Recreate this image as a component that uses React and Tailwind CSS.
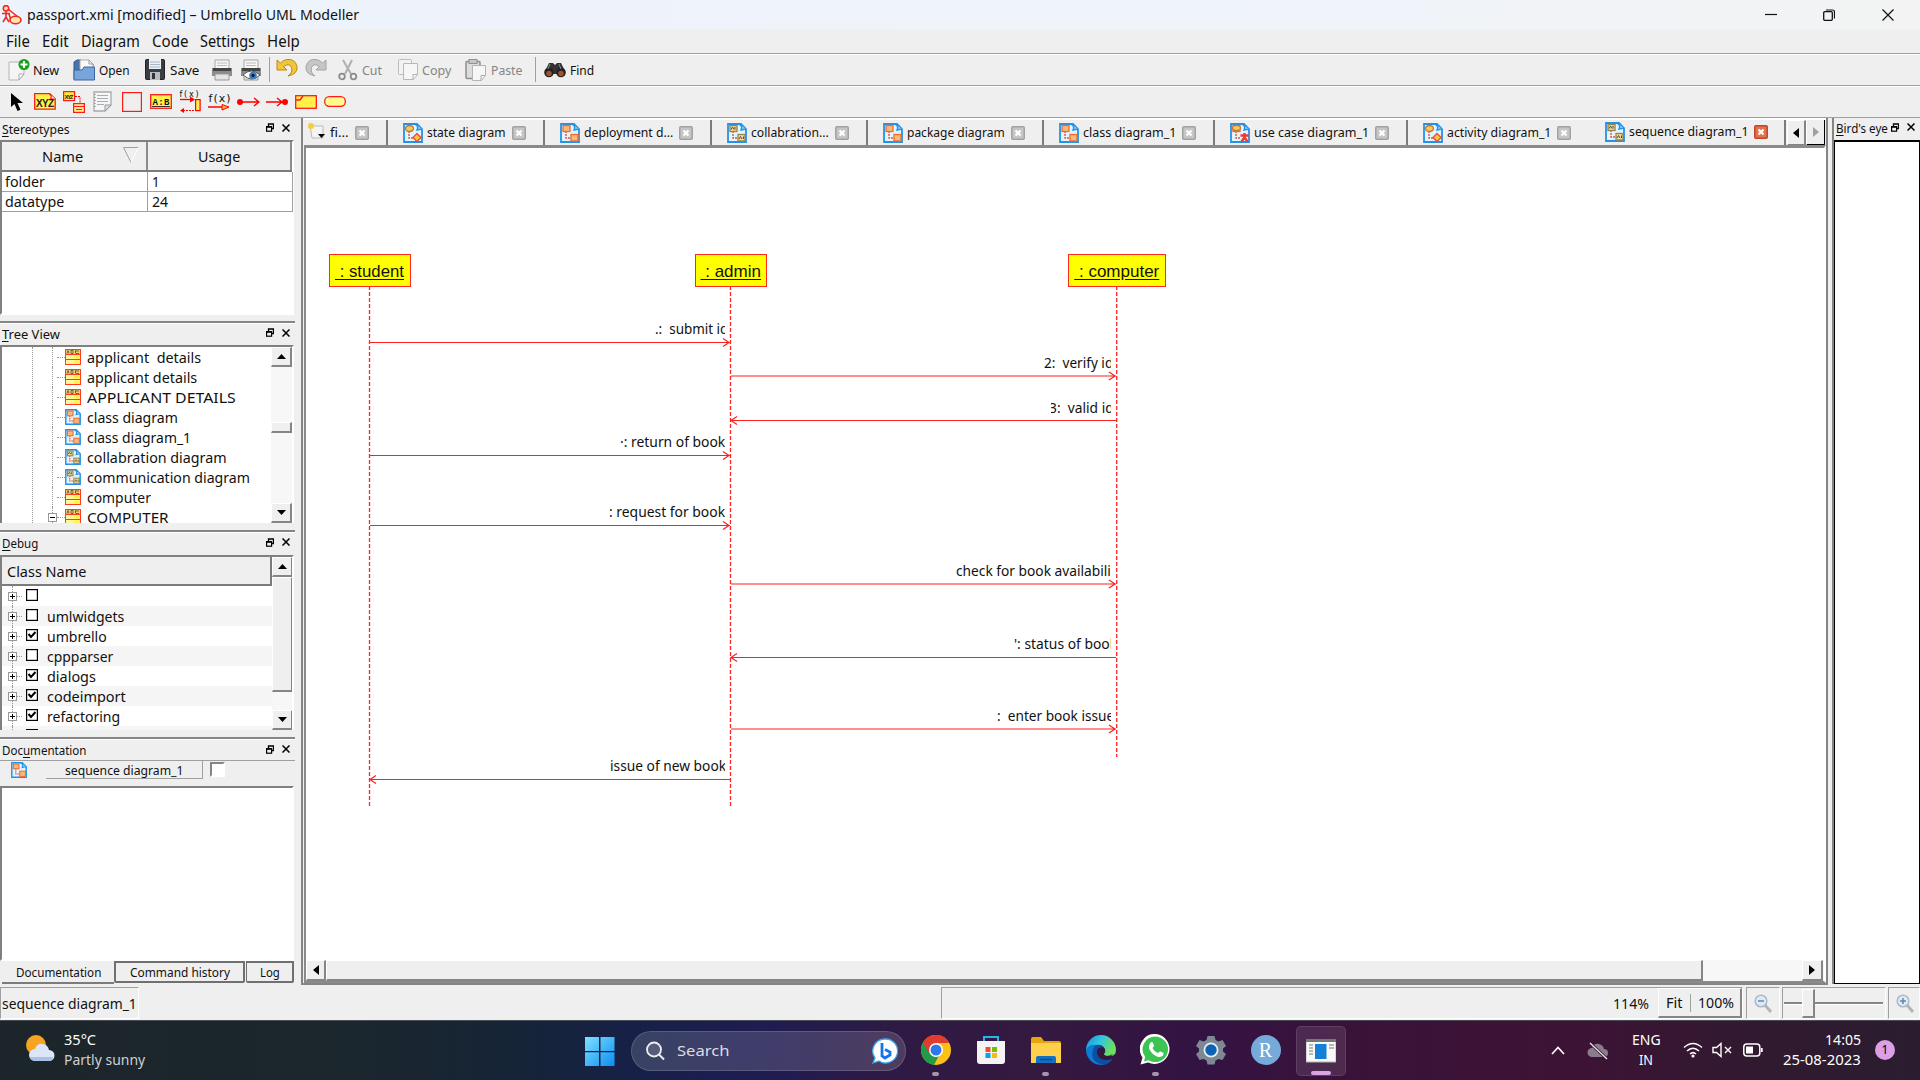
import React, { useLayoutEffect, useRef, useState } from "react";

/* Single line of text fitted to a given advance width. */
function T({ w, className = "", children }) {
  const ref = useRef(null);
  const [scale, setScale] = useState(1);
  useLayoutEffect(() => {
    const natural = ref.current.offsetWidth;
    if (natural) setScale(w / natural);
  }, [w]);
  return (
    <span className={"inline-block shrink-0 " + className} style={{ width: w }}>
      <span
        ref={ref}
        className="inline-block origin-left whitespace-pre"
        style={{ transform: `scaleX(${scale})` }}
      >
        {children}
      </span>
    </span>
  );
}

function Icon({ w, h, box, className = "", children }) {
  return (
    <svg width={w} height={h} viewBox={box || `0 0 ${w} ${h}`} fill="none" className={"block shrink-0 " + className}>
      {children}
    </svg>
  );
}

const bevel = "border-t border-l border-t-white border-l-white border-b-2 border-r-2 border-b-[#858585] border-r-[#858585] bg-[#efefef]";

/* ---------- toolbar icons ---------- */
const NewIcon = ({ className }) => (
  <Icon w={22} h={22} className={className}>
    <path d="M1 3h15v12l-5 6H1z" fill="#f5f5f5" stroke="#b5b5b5" />
    <path d="M16 15h-5v6z" fill="#fff" stroke="#aaa" />
    <circle cx="16" cy="5.500" r="5.500" fill="#14a016" />
    <path d="M16 2v7M12.500 5.500h7" stroke="#fff" strokeWidth="2.200" />
  </Icon>
);
const OpenIcon = ({ className }) => (
  <Icon w={22} h={22} className={className}>
    <path d="M1 20V3l3-2h4l2 4h10v5" fill="#4a74a8" stroke="#35598a" />
    <path d="M7 1h9l4 4v9H7z" fill="#fafafa" stroke="#aaa" />
    <path d="M16 1v4h4" stroke="#999" />
    <path d="M1 11h8l2-3h10.500v13H1z" fill="#77a5dc" stroke="#3a67a0" />
  </Icon>
);
const SaveIcon = ({ className }) => (
  <Icon w={20} h={21} className={className}>
    <rect x="0.500" y="0.500" width="19" height="20" rx="1" fill="#3a3d42" stroke="#222" />
    <rect x="4" y="0" width="12" height="10" fill="#eef1f4" />
    <path d="M5 3h10M5 5.500h10M5 8h10" stroke="#a9b6c4" />
    <rect x="5" y="13" width="10" height="8" fill="#b9bcc0" />
    <rect x="7" y="14" width="3" height="6" fill="#333" />
  </Icon>
);
const PrintIcon = ({ className, preview }) => (
  <Icon w={22} h={22} className={className}>
    <path d="M4 1h14v9H4z" fill="#f7f7f7" stroke="#a5a5a5" />
    <path d="M6 4h10M6 6.500h10" stroke="#bbb" />
    <path d="M1 9h20v8H1z" fill="#8b8b8b" />
    <path d="M2 9h18v3H2z" fill="#444" />
    <path d="M4 15h14v6H4z" fill="#e4e4e4" stroke="#999" />
    {preview && (
      <g>
        <path d="M3 16q8-8 17 0-8 8-17 0z" fill="#fff" stroke="#555" />
        <circle cx="13" cy="16.500" r="3.800" fill="#3f7fc0" />
        <circle cx="13" cy="16.500" r="1.700" fill="#123" />
      </g>
    )}
  </Icon>
);
const UndoIcon = ({ className, flip, fill, stroke }) => (
  <Icon w={22} h={20} className={className}>
    <g transform={flip ? "translate(22 0) scale(-1 1)" : undefined}>
      <path d="M1 2v10h10L7.500 8.500q6-4 8 1 1.500 5-3.500 8.500 10-2 9-9.500-2-8-10-7Q7 2 4.500 5z" fill={fill} stroke={stroke} />
    </g>
  </Icon>
);
const CutIcon = ({ className }) => (
  <Icon w={20} h={22} className={className}>
    <path d="M5 1l8 14M14 1L7 15" stroke="#b0b0b0" strokeWidth="2" />
    <circle cx="4" cy="17.500" r="2.800" stroke="#8c8c8c" strokeWidth="1.800" />
    <circle cx="15.500" cy="17.500" r="2.800" stroke="#8c8c8c" strokeWidth="1.800" />
  </Icon>
);
const CopyIcon = ({ className }) => (
  <Icon w={20} h={21} className={className}>
    <rect x="0.500" y="0.500" width="13" height="15" rx="1" fill="#f3f3f3" stroke="#bdbdbd" />
    <path d="M5.500 4.500h14v11l-4 5h-10z" fill="#f6f6f6" stroke="#b8b8b8" />
    <path d="M19 15.500h-4v5" stroke="#b0b0b0" />
  </Icon>
);
const PasteIcon = ({ className }) => (
  <Icon w={21} h={22} className={className}>
    <rect x="1" y="2.500" width="14" height="17" rx="1" fill="#ddd" stroke="#8f8f8f" strokeWidth="1.500" />
    <rect x="4" y="0.500" width="8" height="4" fill="#c7c7c7" stroke="#909090" />
    <path d="M7.500 6.500h13v10l-4 5h-9z" fill="#f6f6f6" stroke="#b4b4b4" />
    <path d="M20 16.500h-4v5" stroke="#a8a8a8" />
  </Icon>
);
const FindIcon = ({ className }) => (
  <Icon w={22} h={16} className={className}>
    <path d="M5 1h4l2 2 2-2h4l4 8v3H1V9z" fill="#333" />
    <circle cx="5" cy="10.500" r="4.800" fill="#222" />
    <circle cx="17" cy="10.500" r="4.800" fill="#222" />
    <circle cx="5" cy="11.500" r="2.700" fill="#a1562a" />
    <circle cx="17" cy="11.500" r="2.700" fill="#a1562a" />
    <path d="M6 2l-2 5M15 2l2 5" stroke="#888" />
  </Icon>
);

/* ---------- small document/diagram icons ---------- */
function DiagramIcon({ size = 20, kind = "box", className = "" }) {
  const fill = kind === "text" ? "#e9d9a0" : "#f9b87d";
  return (
    <Icon w={size} h={size} box="0 0 20 20" className={className}>
      <path d="M1 1h13l5 5v13H1z" fill="#e3f4fd" stroke="#2492e6" strokeWidth="1.800" />
      <path d="M12 1q4 2 2 6l5-1" fill="#8fd0fa" stroke="#2492e6" strokeWidth="1.400" />
      <path d="M6 8v7h5" stroke="#e8503a" strokeWidth="1.400" strokeDasharray="2 1" />
      {kind === "round" ? <ellipse cx="6.500" cy="5.500" rx="4" ry="3" fill="#f5c95c" stroke="#c8762c" strokeWidth="1.300" /> : (
        <rect x="3" y="2.500" width="7" height="6" fill={fill} stroke={kind === "text" ? "#97834b" : "#ef6b2e"} strokeWidth="1.300" />
      )}
      {kind === "text" && <path d="M4 6.500l1.500-2.500L7 6.500M8 4v2.500" stroke="#57512f" />}
      {kind === "round" ? <path d="M14 10.500l4 4-4 4-4-4z" fill="#ffc63b" stroke="#ef4a3a" strokeWidth="1.300" /> : kind === "actor" ? null : (
        <rect x="11" y="11.500" width="7" height="6.500" fill={fill} stroke={kind === "text" ? "#97834b" : "#ef6b2e"} strokeWidth="1.300" />
      )}
      {kind === "text" && <path d="M12 16l1.500-2.500L15 16M16.500 13.500V16" stroke="#57512f" />}
      {kind === "actor" && (
        <g>
          <ellipse cx="6.500" cy="5" rx="4" ry="2.500" fill="#f5c95c" stroke="#c8762c" strokeWidth="1.200" />
          <path d="M14.500 10v5M10.500 12.500h8M11.500 18.500l3-4 3 4" stroke="#f0392e" strokeWidth="2.400" />
        </g>
      )}
    </Icon>
  );
}
const ClassIcon = () => (
  <Icon w={16} h={16}>
    <rect x="0.500" y="0.500" width="15" height="15" fill="#fff59a" stroke="#ff3b20" />
    <rect x="1" y="1" width="14" height="4" fill="#e6d27c" />
    <path d="M2 4.500l1-3 1 3M6 1.500v3h2v-3zM11 4.500h3M10 2h4M10.500 1.500v3" stroke="#5a4a1c" strokeWidth="0.800" />
    <path d="M0 5.500h16M0 10.500h16" stroke="#ff3b20" />
    <path d="M9 6.500h5.500v3H9zM9 11.500h5.500v3H9z" fill="#fff04a" />
  </Icon>
);

function CloseBox({ active }) {
  return (
    <Icon w={14} h={14}>
      <rect x="0.750" y="0.750" width="12.500" height="12.500" rx="1" fill={active ? "#e2714e" : "#c6c6c6"} stroke={active ? "#c8452a" : "#a2a2a2"} strokeWidth="1.500" />
      <path d="M4.500 4.500l5 5M9.500 4.500l-5 5" stroke="#fff" strokeWidth="2.200" />
    </Icon>
  );
}

/* ---------- dock pieces ---------- */
function DockButtons({ className = "" }) {
  return (
    <div className={"flex items-center " + className}>
      <Icon w={8} h={9}>
        <path d="M2.500 3V0.800h5v4.700H6M2 1h6" stroke="#000" strokeWidth="1.300" />
        <rect x="0.600" y="3.600" width="5" height="4.600" stroke="#000" strokeWidth="1.200" />
        <path d="M0 4h6" stroke="#000" strokeWidth="1.500" />
      </Icon>
      <Icon w={8} h={8} className="ml-2">
        <path d="M0.500 0.500l7 7M7.500 0.500l-7 7" stroke="#000" strokeWidth="1.500" />
      </Icon>
    </div>
  );
}
function DockTitle({ w, pre = "", u, post, className = "" }) {
  return (
    <div className={"flex items-center justify-between pr-[5px] pl-[2px] text-[12.5px] leading-[18px] " + className}>
      <T w={w}>{pre}<span className="underline underline-offset-2">{u}</span>{post}</T>
      <DockButtons className="-mt-1" />
    </div>
  );
}
function Arrow({ dir, color = "#000" }) {
  const d = { up: "M0 5h9L4.500 0z", down: "M0 0h9L4.500 5z", left: "M6 0v10L0 5z", right: "M0 0v10l6-5z" }[dir];
  const v = dir === "up" || dir === "down";
  return <Icon w={v ? 9 : 6} h={v ? 5 : 10}><path d={d} fill={color} /></Icon>;
}
const ScrollButton = ({ dir, className = "h-[20px] w-[21px]" }) => (
  <div className={"flex shrink-0 items-center justify-center " + bevel + " " + className}><Arrow dir={dir} /></div>
);
const Divider = () => <div className="h-[3px] shrink-0 border-t-2 border-b border-t-[#858585] border-b-white" />;

const treeItems = [
  ["applicant  details", 114, "class"],
  ["applicant details", 110, "class"],
  ["APPLICANT DETAILS", 149, "class"],
  ["class diagram", 91, "box"],
  ["class diagram_1", 104, "box"],
  ["collabration diagram", 140, "text"],
  ["communication diagram", 163, "text"],
  ["computer", 64, "class"],
  ["COMPUTER", 82, "class"],
];
const debugItems = [
  ["", 0, false],
  ["umlwidgets", 77, false],
  ["umbrello", 60, true],
  ["cppparser", 66, false],
  ["dialogs", 49, true],
  ["codeimport", 79, true],
  ["refactoring", 73, true],
  ["", 0, false],
];

function LeftDock() {
  return (
    <div className="flex h-[867px] w-[295px] shrink-0 flex-col">
      <DockTitle w={68} u="S" post="tereotypes" className="h-[22px] shrink-0 pt-[1px]" />
      <div className="h-[175px] w-[294px] shrink-0 border-2 border-[#808080] border-r-white border-b-white bg-white">
        <div className="flex h-[30px] border-b-2 border-[#7c7c7c] text-[15px] leading-[29px]">
          <div className="flex w-[146px] border-r-2 border-[#8c8c8c] bg-[#efefef] pl-[40px]">
            <T w={41}>Name</T>
            <Icon w={16} h={16} className="mt-[5px] ml-[40px]">
              <path d="M8 15.500L0.500 0.500h15" stroke="#a0a0a0" />
              <path d="M15.500 0.500L8 15.500" stroke="#fff" />
            </Icon>
          </div>
          <div className="flex w-[145px] justify-center border-r-2 border-[#8c8c8c] bg-[#efefef] pl-px"><T w={42}>Usage</T></div>
        </div>
        {[["folder", 40, "1", 6], ["datatype", 59, "24", 16]].map(([n, w, v, vw]) => (
          <div key={n} className="flex h-[20px] w-[291px] border-r border-b border-[#a0a0a0] text-[15px] leading-[18px]">
            <div className="w-[146px] border-r border-[#a0a0a0] pl-[3px]"><T w={w}>{n}</T></div>
            <div className="pl-[4px]"><T w={v === "1" ? 8 : vw}>{v}</T></div>
          </div>
        ))}
      </div>
      <div className="mt-[6px]"><Divider /></div>
      <DockTitle w={58} u="T" post="ree View" className="h-[21px] shrink-0" />
      <div className="flex h-[178px] w-[294px] shrink-0 overflow-hidden border-2 border-[#808080] border-r-white border-b-0 bg-white">
        <div className="flex w-[270px] pl-[30px]">
          <div className="w-[20px] shrink-0 border-l border-dotted border-[#999]" />
          <div className="w-[218px]">
            {treeItems.map(([n, w, k], i) => (
              <div key={i} className="flex h-[20px] items-center border-l border-dotted border-[#999]">
                {i === 8 ? (
                  <div className="-ml-[5px] flex h-[9px] w-[9px] shrink-0 items-center justify-center border border-[#999] bg-white"><div className="h-px w-[5px] bg-black" /></div>
                ) : <div className="w-[4px]" />}
                <div className="w-[8px] border-t border-dotted border-[#999]" />
                {k === "class" ? <ClassIcon /> : <DiagramIcon size={16} kind={k} />}
                <T w={w} className="ml-[6px] text-[15px] leading-[20px]">{n}</T>
              </div>
            ))}
          </div>
        </div>
        <div className="flex w-[21px] shrink-0 flex-col bg-[#f7f7f7]">
          <ScrollButton dir="up" />
          <div className={"mt-[55px] h-[11px] shrink-0 " + bevel} />
          <div className="grow" />
          <ScrollButton dir="down" />
        </div>
      </div>
      <div className="mt-[7px]"><Divider /></div>
      <DockTitle w={36} u="D" post="ebug" className="h-[22px] shrink-0" />
      <div className="flex h-[175px] w-[294px] shrink-0 overflow-hidden border-2 border-[#808080] border-r-white border-b-0 bg-white">
        <div className="w-[270px] shrink-0">
          <div className="h-[29px] border-r-2 border-b-2 border-[#7c7c7c] bg-[#efefef] pl-[5px] text-[15px] leading-[28px]"><T w={79}>Class Name</T></div>
          {debugItems.map(([n, w, on], i) => (
            <div key={i} className={"flex h-[20px] pl-[6px] " + (i % 2 ? "bg-[#f5f5f5]" : "bg-white")}>
              <div className="flex w-[9px] flex-col items-center">
                <div className="h-[6px] border-l border-dotted border-[#999]" />
                <Icon w={9} h={9}><rect x="0.500" y="0.500" width="8" height="8" fill="#fff" stroke="#999" /><path d="M2 4.500h5M4.500 2v5" stroke="#000" /></Icon>
                <div className="h-[5px] border-l border-dotted border-[#999]" />
              </div>
              <div className="mt-[10px] h-0 w-[5px] border-t border-dotted border-[#999]" />
              <Icon w={12} h={12} className="mt-[3px] ml-[4px]">
                <rect x="0.600" y="0.600" width="10.800" height="10.800" fill="#fff" stroke="#000" strokeWidth="1.200" />
                {on && <path d="M2.500 5l2.500 3L9.500 3" stroke="#000" strokeWidth="2" />}
              </Icon>
              <T w={w} className="ml-[9px] text-[15px] leading-[21px]">{n}</T>
            </div>
          ))}
        </div>
        <div className="flex w-[21px] shrink-0 flex-col bg-[#f7f7f7]">
          <ScrollButton dir="up" />
          <div className={"h-[115px] shrink-0 " + bevel} />
          <div className="grow" />
          <ScrollButton dir="down" />
        </div>
      </div>
      <div className="mt-[7px]"><Divider /></div>
      <DockTitle w={84} pre="Doc" u="u" post="mentation" className="h-[20px] shrink-0 pt-[2px]" />
      <div className="flex h-[26px] shrink-0 border-t border-[#a0a0a0] pl-[11px]">
        <DiagramIcon size={16} className="mt-[1px]" />
        <div className="ml-[19px] flex h-[18px] w-[157px] justify-center border-r border-b border-[#a0a0a0] text-[12.5px] leading-[19px]"><T w={118}>sequence diagram_1</T></div>
        <div className="mt-[1px] ml-[7px] h-[15px] w-[15px] border-2 border-[#858585] border-r-white border-b-white bg-white" />
      </div>
      <div className="h-[175px] w-[294px] shrink-0 border-2 border-[#808080] border-r-white border-b-white bg-white" />
      <div className="flex h-[24px] shrink-0 pl-[2px] text-[12.5px]">
        <div className="flex h-[23px] w-[112px] justify-center border-b-2 border-[#7c7c7c] leading-[24px]"><T w={85}>Documentation</T></div>
        <div className="flex h-[22px] w-[131px] justify-center rounded-b-[2px] border-2 border-[#707070] leading-[19px]"><T w={100}>Command history</T></div>
        <div className="ml-px flex h-[22px] w-[48px] justify-center rounded-b-[2px] border-2 border-l border-[#707070] leading-[19px]"><T w={20}>Log</T></div>
      </div>
    </div>
  );
}

const tabs = [
  ["state diagram", 79, "round", "w-[157px]"],
  ["deployment d...", 89, "box", "w-[167px]"],
  ["collabration...", 78, "text", "w-[156px]"],
  ["package diagram", 98, "box", "w-[176px]"],
  ["class diagram_1", 93, "box", "w-[171px]"],
  ["use case diagram_1", 115, "actor", "w-[193px]"],
  ["activity diagram_1", 104, "round", "w-[182px]"],
];

/* Canvas origin lies at the top left corner of the white sheet. */
const lifelines = [
  [": student", "left-[22.5px]", "w-[82px]", 69],
  [": admin", "left-[388.5px]", "w-[72px]", 60],
  [": computer", "left-[762px]", "w-[97.5px]", 85],
];
const messages = [
  [64, 424, 194.500], [425, 810, 228], [810, 425, 272.500], [64, 424, 307.500],
  [64, 424, 377.500], [425, 810, 436], [810, 425, 509.500], [425, 810, 581], [424, 64, 631.500],
];
const labels = [
  [".:  submit id", "left-[349px] w-[70px] top-[171px]", 73, ""],
  ["2:  verify id", "left-[738px] w-[67px] top-[205px]", 69, ""],
  ["3:  valid id", "left-[745px] w-[60px] top-[250px]", 65, "-ml-[2px]"],
  ["·: return of book", "left-[314px] w-[105px] top-[284px]", 105, ""],
  [": request for book", "left-[303px] w-[116px] top-[354px]", 116, ""],
  ["check for book availabili", "left-[650px] w-[155px] top-[413px]", 155, ""],
  ["': status of book", "left-[708px] w-[97px] top-[486px]", 103, ""],
  [":  enter book issue", "left-[691px] w-[114px] top-[558px]", 117, ""],
  ["issue of new book", "left-[304px] w-[115px] top-[608px]", 116, ""],
];

function Canvas() {
  return (
    <div className="relative h-[812px] overflow-hidden bg-white">
      <svg width="1200" height="812" className="absolute top-0 left-0" fill="none">
        <path d="M63.500 138V659M424.500 138V659M810.700 138V609" stroke="#ff2525" strokeWidth="1.300" strokeDasharray="4 2" />
        {messages.map(([a, b, y], i) => {
          const dir = b > a ? 1 : -1;
          const tip = dir > 0 ? b - 1 : b;
          return <path key={i} d={`M${a} ${y}H${b}M${tip - dir * 6} ${y - 4}L${tip} ${y}L${tip - dir * 6} ${y + 4}`} stroke="#ff2020" strokeWidth="1.200" />;
        })}
      </svg>
      {lifelines.map(([n, l, w, tw]) => (
        <div key={n} className={"absolute top-[106px] flex h-[33px] justify-center border-[1.5px] border-[#ff2a1a] bg-[#ff0] font-['Liberation_Sans'] text-[17px] leading-[33px] " + l + " " + w}>
          <T w={tw}><span className="underline underline-offset-2">{" " + n}</span></T>
        </div>
      ))}
      {labels.map(([n, c, w, m]) => (
        <div key={n} className={"absolute flex h-[20px] overflow-hidden text-[14px] leading-[20px] " + c}><T w={w} className={m}>{n}</T></div>
      ))}
    </div>
  );
}

function Workspace() {
  return (
    <div className="ml-[6px] flex h-[867px] w-[1527px] shrink-0 flex-col border-r-2 border-b-2 border-l-2 border-[#858585]">
      <div className="flex h-[27px] shrink-0 border-t-2 border-white text-[12.5px]">
        <div className="flex w-[85px] shrink-0 items-center border-r-2 border-[#7c7c7c] pt-px pl-[4px]">
          <Icon w={18} h={18} className="-mt-1">
            <path d="M3 4h13v12H5z" fill="#f4f4f4" stroke="#bbb" />
            <circle cx="4" cy="4" r="3" fill="#f4cf3b" />
            <path d="M11 12h7l-3.500 4z" fill="#000" />
          </Icon>
          <T w={19} className="ml-[5px]">fi...</T>
          <div className="ml-[6px]"><CloseBox /></div>
        </div>
        {tabs.map(([n, w, k, cls], i) => (
          <div key={n} className={"flex shrink-0 items-center pt-px pl-[15px] " + cls + (i < 6 ? " border-r-2 border-[#7c7c7c]" : "")}>
            <DiagramIcon kind={k} />
            <T w={w} className="ml-[4px]">{n}</T>
            <div className="ml-[6px]"><CloseBox /></div>
          </div>
        ))}
        <div className="flex w-[196px] shrink-0 items-center border-r-2 border-[#7c7c7c] pb-px pl-[15px]">
          <DiagramIcon kind="text" />
          <T w={119} className="ml-[4px]">sequence diagram_1</T>
          <div className="ml-[6px]"><CloseBox active /></div>
        </div>
        <ScrollButton dir="left" className="ml-px h-[26px] w-[19px]" />
        <div className="flex h-[26px] w-[19px] shrink-0 items-center justify-center border-r border-b-2 border-l border-black border-l-white bg-[#efefef]"><Arrow dir="right" color="#a0a0a0" /></div>
      </div>
      <div className="ml-px h-[838px] border-t-[3px] border-r-2 border-b-2 border-l-2 border-[#8a8a8a] border-r-white">
        <Canvas />
        <div className="flex h-[21px] bg-[#f7f7f7]">
          <ScrollButton dir="left" className="h-[21px] w-[20px]" />
          <div className={"w-[1377px] " + bevel} />
          <div className="grow" />
          <ScrollButton dir="right" className="mr-px h-[21px] w-[21px]" />
        </div>
      </div>
    </div>
  );
}

function BirdsEye() {
  return (
    <div className="ml-[4px] flex h-[866px] w-[88px] shrink-0 flex-col border-l-2 border-[#858585]">
      <div className="flex h-[22px] items-center text-[12.5px] leading-[20px]">
        <div className="ml-[2px] flex w-[52px] shrink-0 overflow-hidden"><T w={79}><span className="underline underline-offset-2">B</span>ird's eye view</T></div>
        <DockButtons className="-mt-[4px] ml-[3px]" />
      </div>
      <div className="grow border border-t-2 border-black bg-white" />
    </div>
  );
}

const ZoomGlass = ({ plus, className = "" }) => (
  <Icon w={18} h={19} className={className}>
    <path d="M10 10l7 8" stroke="#b5b5b5" strokeWidth="3" />
    <circle cx="7" cy="7" r="5.800" fill="#dfeaf5" stroke="#a9bac9" strokeWidth="1.500" />
    <path d={plus ? "M4 7h6M7 4v6" : "M4 7h6"} stroke="#6787a8" strokeWidth="1.500" />
  </Icon>
);

function StatusBar() {
  const cell = "border border-[#a0a0a0] border-r-white border-b-white";
  return (
    <div className="flex h-[35px] shrink-0 pt-[2px] pb-px text-[15px] leading-[30px]">
      <div className={"w-[140px] pl-[1px] " + cell}><T w={135}>sequence diagram_1</T></div>
      <div className={"ml-[802px] flex w-[802px] shrink-0 pl-[671px] text-[14.5px] " + cell}>
        <T w={36}>114%</T>
        <div className={"ml-[9px] flex w-[84px] pl-[7px] leading-[27px] " + bevel}>
          <T w={17}>Fit</T>
          <div className="mt-[5px] ml-[7px] h-[18px] w-px bg-[#a0a0a0]" />
          <T w={36} className="ml-[7px]">100%</T>
        </div>
      </div>
      <div className={"ml-[3px] flex w-[34px] shrink-0 items-center justify-center " + cell}><ZoomGlass /></div>
      <div className={"ml-[2px] flex w-[104px] shrink-0 items-center pl-px " + cell}>
        <div className="h-[3px] w-[18px] border-t-2 border-b border-[#858585] border-b-white" />
        <div className={"h-[29px] w-[13px] " + bevel} />
        <div className="h-[3px] w-[68px] border-t-2 border-b border-[#858585] border-b-white" />
      </div>
      <div className={"ml-[2px] flex w-[32px] shrink-0 items-center pl-[7px] " + cell}><ZoomGlass plus /></div>
    </div>
  );
}

function Toolbars() {
  const gray = "text-[#858585]";
  return (
    <>
      <div className="flex h-[32px] shrink-0 items-center border-t border-[#a0a0a0] pl-[8px] text-[13px] leading-[20px] shadow-[inset_0_1px_0_#fff]">
        <NewIcon />
        <T w={26} className="ml-[3px] pt-px">New</T>
        <OpenIcon className="ml-[14px]" />
        <T w={31} className="ml-[4px] pt-px">Open</T>
        <SaveIcon className="ml-[15px]" />
        <T w={29} className="ml-[5px] pt-px">Save</T>
        <PrintIcon className="ml-[12px]" />
        <PrintIcon preview className="ml-[7px]" />
        <div className="ml-[7px] h-[25px] w-px bg-[#a0a0a0]" />
        <UndoIcon fill="#f3c53a" stroke="#b98a14" className="-mt-1 ml-[6px]" />
        <UndoIcon flip fill="#c6c6c6" stroke="#a4a4a4" className="-mt-1 ml-[7px]" />
        <CutIcon className="ml-[11px]" />
        <T w={20} className={"ml-[4px] pt-px " + gray}>Cut</T>
        <CopyIcon className="ml-[16px]" />
        <T w={29} className={"ml-[4px] pt-px " + gray}>Copy</T>
        <PasteIcon className="ml-[14px]" />
        <T w={31} className={"ml-[5px] pt-px " + gray}>Paste</T>
        <div className="ml-[13px] h-[25px] w-px bg-[#a0a0a0]" />
        <FindIcon className="ml-[8px]" />
        <T w={24} className="ml-[4px] pt-px">Find</T>
      </div>
      <div className="flex h-[32px] shrink-0 items-center border-t border-[#a0a0a0] pl-[10px] shadow-[inset_0_1px_0_#fff]">
        <Icon w={14} h={18}><path d="M1 0v14l3.500-3 3 7 3-1.200-3-6.800H13z" fill="#000" /></Icon>
        <Icon w={22} h={17} className="ml-[10px]">
          <path d="M0.700 0.700h15l5.500 5v10.500H0.700z" fill="#fff04a" stroke="#ff1a1a" strokeWidth="1.300" />
          <path d="M15.500 1q3 2 1 5l5 0" fill="#fff" stroke="#ff1a1a" strokeWidth="1.200" />
          <text x="2" y="14" fontSize="10" fontWeight="700" textLength="18" fill="#222" fontFamily="Liberation Sans">XYZ</text>
        </Icon>
        <Icon w={22} h={22} className="ml-[7px]">
          <rect x="0.600" y="0.600" width="11" height="9" fill="#ffe838" stroke="#ff1a1a" strokeWidth="1.200" />
          <text x="1.500" y="8" fontSize="6" fontWeight="700" textLength="9" fill="#222" fontFamily="Liberation Sans">XYZ</text>
          <path d="M12 5.500h5V12" stroke="#f00" strokeDasharray="2 1" />
          <rect x="10.600" y="12.600" width="10.800" height="8.800" fill="#ffe88a" stroke="#ff1a1a" strokeWidth="1.200" />
          <path d="M11 15.500h10M13 18.500h6" stroke="#ff1a1a" />
        </Icon>
        <Icon w={19} h={21} className="ml-[8px]">
          <path d="M1 1h17v13l-6 6H1z" fill="#f6f6f6" stroke="#aaa" strokeWidth="1.300" />
          <path d="M4 4.500h11M4 7.500h11M4 10.500h11M4 13.500h7" stroke="#a5adb5" />
          <path d="M2 3v15" stroke="#777" strokeDasharray="1 2" />
          <path d="M18 14h-6v6z" fill="#ddd" stroke="#999" />
        </Icon>
        <Icon w={20} h={20} className="ml-[10px]"><rect x="0.600" y="0.600" width="18.800" height="18.800" stroke="#ff1a1a" strokeWidth="1.200" /></Icon>
        <Icon w={22} h={15} className="ml-[8px]">
          <rect x="0.700" y="0.700" width="20.600" height="13.600" fill="#fff04a" stroke="#ff1a1a" strokeWidth="1.300" />
          <text x="2.500" y="10.500" fontSize="9" fontWeight="700" textLength="17" fill="#111" fontFamily="Liberation Mono">A:B</text>
          <path d="M2 12.500h18" stroke="#333" />
        </Icon>
        <Icon w={22} h={23} className="ml-[7px]">
          <text x="0.500" y="6.500" fontSize="8" textLength="19" fill="#111" fontFamily="DejaVu Sans">f(x)</text>
          <path d="M1 9.500h14" stroke="#f00" strokeWidth="1.300" />
          <path d="M11 6.500l5 3-5 3z" fill="#f00" />
          <rect x="16.600" y="9.600" width="4.500" height="11" fill="#fff04a" stroke="#f00" strokeWidth="1.200" />
          <path d="M4 20.500h13" stroke="#f00" strokeDasharray="2 1" />
          <path d="M5 18l-4 2.500L5 23z" fill="#f00" />
        </Icon>
        <Icon w={23} h={18} className="ml-[7px]">
          <text x="0.500" y="9" fontSize="11" textLength="22" fill="#111" fontFamily="DejaVu Sans">f(x)</text>
          <path d="M0 14h15" stroke="#f00" strokeWidth="1.500" />
          <path d="M14 11.500l7 2.500-7 3z" fill="#ffb22a" stroke="#f00" />
        </Icon>
        <Icon w={23} h={10} className="ml-[6px]">
          <circle cx="3" cy="5" r="3" fill="#f00" />
          <path d="M3 5h19M17 1l5 4-5 4" stroke="#f00" strokeWidth="1.400" />
        </Icon>
        <Icon w={22} h={10} className="ml-[6px]">
          <circle cx="19" cy="5" r="3" fill="#f00" />
          <path d="M0 5h19M11 1l5 4-5 4" stroke="#f00" strokeWidth="1.400" />
        </Icon>
        <Icon w={22} h={14} className="ml-[7px]">
          <rect x="0.700" y="0.700" width="20.600" height="12.600" fill="#fff04a" stroke="#ff1a1a" strokeWidth="1.300" />
          <path d="M1 5h4l3-4" stroke="#ff1a1a" strokeWidth="1.300" />
        </Icon>
        <Icon w={22} h={11} className="ml-[7px]"><rect x="0.700" y="0.700" width="20.600" height="9.600" rx="4.500" fill="#fff98e" stroke="#ff1a1a" strokeWidth="1.300" /></Icon>
      </div>
    </>
  );
}

function Taskbar() {
  return (
    <div className="flex h-[60px] shrink-0 items-center border-t border-[#4a4d55] bg-[linear-gradient(90deg,#1c252a_0%,#1b272d_18%,#152437_27%,#17204a_34%,#1f1c52_40%,#2d1a45_46%,#35193f_54%,#331343_62%,#3b1238_72%,#3d1335_82%,#301a30_92%,#2b1d2f_100%)] text-white">
      <Icon w={32} h={32} className="-mt-[3px] ml-[24px]">
        <circle cx="12" cy="12" r="10" fill="#f5a522" />
        <path d="M11 28a6 6 0 010-12q2-6 8-5 5 1 6 6a5.500 5.500 0 010 11z" fill="#dbe6f6" />
        <path d="M11 28a6 6 0 01-5-4h23a5 5 0 01-4 4z" fill="#a9c1e6" />
      </Icon>
      <div className="-mt-[4px] ml-[8px] flex w-[100px] flex-col text-[15px] leading-[20px]">
        <T w={32}>35°C</T>
        <T w={81} className="text-[#cfd0d4]">Partly sunny</T>
      </div>
      <Icon w={30} h={30} className="ml-[421px]">
        <defs><linearGradient id="win" x1="0" y1="0" x2="1" y2="1"><stop stopColor="#7fe0ff" /><stop offset="1" stopColor="#0a8ef2" /></linearGradient></defs>
        <path d="M0 1h14v14H0zM15.500 1H29.500v14h-14zM0 16.300h14V30H0zM15.500 16.300h14V30h-14z" fill="url(#win)" />
      </Icon>
      <div className="ml-[16px] flex h-[40px] w-[275px] shrink-0 items-center rounded-full border border-white/15 bg-white/15 pl-[13px] text-[15px] text-[#dcdce2]">
        <Icon w={20} h={20}>
          <circle cx="9" cy="8.500" r="7" fill="#fff" fillOpacity="0.150" stroke="#eee" strokeWidth="1.800" />
          <path d="M14 13.500l5 5" stroke="#eee" strokeWidth="2" />
        </Icon>
        <T w={52} className="ml-[12px]">Search</T>
        <Icon w={26} h={26} className="ml-[143px]">
          <path d="M13 1a12 12 0 11-6 22l-6 2 2-5A12 12 0 0113 1z" fill="#fff" />
          <path d="M13 1a12 12 0 11-6 22l-6 2 2-5A12 12 0 0113 1z" stroke="#3ba5ec" strokeWidth="1.300" />
          <path d="M10 5v13l3 2 5-3v-3l-5-2.500" stroke="#1674e8" strokeWidth="2.800" />
        </Icon>
      </div>
      <div className="flex h-[58px] items-center">
        <AppSlot className="ml-[2px]" dot>
          <Icon w={30} h={30}>
            <circle cx="15" cy="15" r="15" fill="#fbc116" />
            <path d="M15 15L2 7.500A15 15 0 0128 7.500L15 8z" fill="#e33b2e" />
            <path d="M2 7.500A15 15 0 0013 29.900l6-11.400z" fill="#229a48" />
            <path d="M15 0A15 15 0 012 7.500l6.500 11L15 8h13A15 15 0 0015 0z" fill="#e33b2e" />
            <circle cx="15" cy="15" r="7" fill="#fff" />
            <circle cx="15" cy="15" r="5.500" fill="#2f76e8" />
          </Icon>
        </AppSlot>
        <AppSlot>
          <Icon w={30} h={30}>
            <path d="M8 8V2h14v6" stroke="#2db1ee" strokeWidth="2" />
            <path d="M1 6h28v20q0 3-3 3H4q-3 0-3-3z" fill="#f4f4f4" />
            <path d="M9.500 12h5v5h-5z" fill="#f04e23" /><path d="M16 12h5v5h-5z" fill="#7db909" />
            <path d="M9.500 18h5v5h-5z" fill="#0aa2ed" /><path d="M16 18h5v5h-5z" fill="#fcb813" />
          </Icon>
        </AppSlot>
        <AppSlot dot>
          <Icon w={30} h={28}>
            <path d="M0 3q0-2 2-2h8l3 4h15q2 0 2 2v5H0z" fill="#e8a40c" />
            <path d="M0 7h30v20H0z" fill="#ffd04b" />
            <path d="M5 27v-5q0-2 2-2h16q2 0 2 2v5z" fill="#1271c4" />
            <path d="M9 23.500h12" stroke="#0a4d8c" strokeWidth="1.500" />
          </Icon>
        </AppSlot>
        <AppSlot>
          <Icon w={30} h={30}>
            <defs><linearGradient id="edge" x1="0" y1="0" x2="1" y2="0.400"><stop stopColor="#1592dd" /><stop offset="0.500" stopColor="#33c5e0" /><stop offset="1" stopColor="#6be05a" /></linearGradient></defs>
            <path d="M0 15a15 15 0 0130 0q0 6-6 6-6 0-6-2 2-2 1-5-2-4-7-4Q3 10 0 16z" fill="url(#edge)" />
            <path d="M0 15q3-6 10-5-4 4-2 11 3 7 12 8A15 15 0 010 15z" fill="#0b7bd6" />
            <path d="M10 10q6-1 8 3-7-1-7 4 1 8 10 8 4 0 6-2-3 6-9 6.500Q5 28 6.500 17q1-5 3.500-7z" fill="#0b4f9e" />
            <path d="M11 17q0-5 6-4.500 2 2.500 0 6-1 1 1 2 4 1.500 9-1.500-4 5-9 5-6 0-7-7z" fill="#35183f" />
          </Icon>
        </AppSlot>
        <AppSlot dot>
          <Icon w={31} h={31}>
            <path d="M15.500 0a15 15 0 11-7.500 28.500L0.500 30.500l2-7A15 15 0 0115.500 0z" fill="#fff" />
            <path d="M15.500 2.500a12.800 12.800 0 11-7 23.700L4 27.500l1.200-4.500a12.800 12.800 0 0110.300-20.500z" fill="#3cc453" />
            <path d="M10.500 8.500q1.500-1 2.200 0l1.300 3q0 1-1.500 2.500 2 4 5.500 5 1.500-2 2.500-1.500l3 1.500q.5 3.500-4 4-4-.2-8-4.500-4.500-5-1-10z" fill="#fff" />
          </Icon>
        </AppSlot>
        <AppSlot>
          <Icon w={30} h={30}>
            <path d="M11.500 1h7l1 4 3 1.500 4-1.500 3.500 6-3 2.500v3l3 2.500-3.500 6-4-1-3 1.500-1 4h-7l-1-4-3-1.500-4 1L0 19l3-2.500v-3L0 11l3.500-6 4 1.500 3-1.500z" fill="#7d8894" />
            <circle cx="15" cy="15" r="7.500" fill="#e6edf3" />
            <circle cx="15" cy="15" r="5.700" fill="#0d62b4" />
          </Icon>
        </AppSlot>
        <AppSlot>
          <div className="flex h-[30px] w-[30px] items-center justify-center rounded-full bg-[#75aadb] font-['Liberation_Serif'] text-[20px] text-white">R</div>
        </AppSlot>
        <div className="ml-[3px] flex h-[50px] w-[50px] flex-col items-center rounded-[5px] border border-white/10 bg-white/10 pt-[12px]">
          <Icon w={30} h={24}>
            <path d="M0 1h30v22H0z" fill="#f8f8f8" stroke="#b5b5b5" />
            <path d="M0 0h30v3H0z" fill="#777" />
            <path d="M9 5h11.500v15H9z" fill="#137fd6" />
            <path d="M3 6h4M3 9h4M3 12h4M3 15h4M23 6h5M23 9h5" stroke="#777" />
          </Icon>
          <div className="mt-[8px] h-[4px] w-[20px] shrink-0 rounded-full bg-[#d9a3e4]" />
        </div>
      </div>
      <Icon w={14} h={9} className="ml-[205px]"><path d="M1 8l6-6.500L13 8" stroke="#fff" strokeWidth="1.700" /></Icon>
      <Icon w={22} h={18} className="ml-[22px]">
        <path d="M5 15a4.500 4.500 0 010-9q2-5 7-4 4 1 5 5a4 4 0 010 8z" fill="#8b7b8b" />
        <path d="M3 1l17 16" stroke="#3a1534" strokeWidth="3" /><path d="M3 1l17 16" stroke="#e9e3e9" strokeWidth="1.400" />
      </Icon>
      <div className="-mt-[3px] ml-[22px] flex w-[30px] flex-col items-center text-[14.5px] leading-[20px]"><T w={29}>ENG</T><T w={14}>IN</T></div>
      <Icon w={20} h={16} className="-mt-[2px] ml-[22px]">
        <path d="M1 5.500q9-8 18 0M4 9q6-5.500 12 0M7 12q3-2.800 6 0" stroke="#fff" strokeWidth="1.500" />
        <circle cx="10" cy="14" r="1.600" fill="#fff" />
      </Icon>
      <Icon w={20} h={16} className="-mt-[2px] ml-[9px]">
        <path d="M1 5.500h3.500L9 1.500v13l-4.500-4H1z" stroke="#fff" strokeWidth="1.400" />
        <path d="M13 5l6 6M19 5l-6 6" stroke="#fff" strokeWidth="1.400" />
      </Icon>
      <Icon w={20} h={14} className="-mt-[2px] ml-[11px]">
        <rect x="0.800" y="1" width="16" height="12" rx="3" stroke="#fff" strokeWidth="1.500" />
        <rect x="3" y="3.500" width="7" height="7" fill="#fff" /><path d="M18.800 5v4" stroke="#fff" strokeWidth="1.800" />
      </Icon>
      <div className="-mt-[3px] ml-[20px] flex w-[78px] flex-col items-end text-[14.5px] leading-[20px]"><T w={36}>14:05</T><T w={78}>25-08-2023</T></div>
      <div className="-mt-[2px] ml-[14px] flex h-[20px] w-[20px] items-center justify-center rounded-full bg-[#dc9fe6] text-[12px] text-black">1</div>
    </div>
  );
}
function AppSlot({ dot, className = "", children }) {
  return (
    <div className={"flex h-[58px] w-[55px] shrink-0 flex-col items-center pt-[12px] " + className}>
      <div className="flex h-[32px] shrink-0 items-center justify-center">{children}</div>
      {dot && <div className="mt-[6px] h-[4px] w-[7px] shrink-0 rounded-full bg-[#a595ab]" />}
    </div>
  );
}

export default function App() {
  return (
    <div className="flex h-[1080px] w-[1920px] flex-col overflow-hidden bg-[#efefef] font-['Noto_Sans',sans-serif] text-[#111]">
      <div className="flex h-[29px] shrink-0 items-center bg-[linear-gradient(90deg,#edf3fc,#f0f3fa_70%,#f3f3f3)] pl-[2px] text-[15px]">
        <Icon w={20} h={20}>
          <g stroke="#f02a20" strokeWidth="1.600">
            <circle cx="4" cy="3.300" r="2.700" fill="#ffe6a8" />
            <path d="M4 6v6M0 8.500h8M1 17l3-5 3 5M6 4l10 8M7 9l2 6" />
            <ellipse cx="13.500" cy="15" rx="5.500" ry="3.800" fill="#ffe6a8" />
          </g>
        </Icon>
        <T w={332} className="ml-[5px]">passport.xmi [modified] – Umbrello UML Modeller</T>
        <Icon w={12} h={12} className="ml-[1406px]"><path d="M0 5.500h12" stroke="#111" strokeWidth="1.200" /></Icon>
        <Icon w={12} h={12} className="ml-[46px]">
          <rect x="0.700" y="2.700" width="8.600" height="8.600" rx="1" stroke="#111" strokeWidth="1.300" />
          <path d="M3 1h6.500q2 0 2 2v6.500" stroke="#111" strokeWidth="1.200" />
        </Icon>
        <Icon w={12} h={12} className="ml-[47px]"><path d="M0.500 0.500l11 11M11.500 0.500l-11 11" stroke="#111" strokeWidth="1.200" /></Icon>
      </div>
      <div className="flex h-[24px] shrink-0 items-center gap-[12px] pl-[6px] text-[15.500px] leading-[24px]">
        {[["File", 24], ["Edit", 27], ["Diagram", 59], ["Code", 36], ["Settings", 55], ["Help", 33]].map(([n, w]) => <T key={n} w={w}>{n}</T>)}
      </div>
      <Toolbars />
      <div className="flex h-[868px] shrink-0 border-t border-[#a0a0a0]">
        <LeftDock />
        <Workspace />
        <BirdsEye />
      </div>
      <StatusBar />
      <Taskbar />
    </div>
  );
}
